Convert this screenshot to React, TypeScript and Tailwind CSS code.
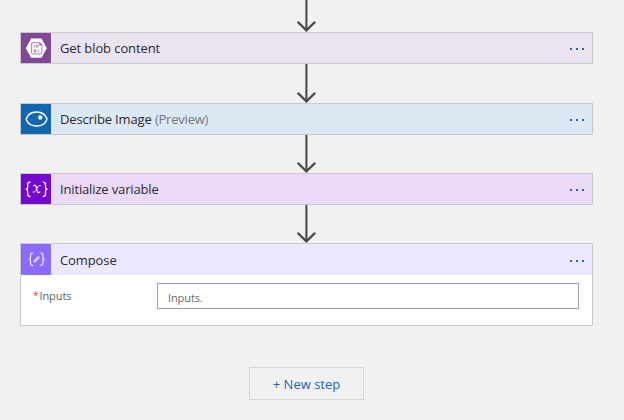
import type { ReactNode } from "react";

function Arrow({ className, length }: { className: string; length: number }) {
  return (
    <svg className={`block shrink-0 ${className}`} viewBox={`0 0 20 ${length}`} fill="none" stroke="#4b4b4b">
      <path d={`M9.4 0V${length - 1.5}`} strokeWidth="2.1" />
      <path d={`M1.2 ${length - 9.6}L9.4 ${length - 1.6}L17.6 ${length - 9.6}`} strokeWidth="2.2" strokeLinecap="round" />
    </svg>
  );
}

function BlobIcon() {
  return (
    <svg className="size-[31px]" viewBox="0 0 31 31" fill="none">
      <path d="M10.1 5.6h10.4l5.3 9.6-5.3 9.5H10.1L4.8 15.2z" fill="#fff" />
      <path d="M11.6 9.7h7.3l2 2v8.2q0 1-1 1h-8.3q-1 0-1-1v-9.2q0-1 1-1z" stroke="#9a70af" strokeWidth=".9" />
      <path d="M18.4 9.5v2.8h2.8z" fill="#804998" />
      <path d="M13.3 11.6v2.8M15.3 12h1.8v2.1h-1.8zM13 16.7h1.8v2.3H13zM17.3 16.4v2.8" stroke="#9a70af" strokeWidth=".8" />
    </svg>
  );
}

function EyeIcon() {
  return (
    <svg className="size-[31px]" viewBox="0 0 31 31" fill="none">
      <path d="M5.1 15C6.6 10.8 10.5 8 15.6 8S24.6 10.8 26.1 15C24.6 19.2 20.7 22 15.6 22S6.6 19.2 5.1 15z" stroke="#fff" strokeWidth="1.4" strokeLinejoin="round" />
      <rect x="17.4" y="11.6" width="3.8" height="3.8" rx=".7" fill="#fff" />
    </svg>
  );
}

function VariableIcon() {
  return (
    <svg className="size-[31px]" viewBox="0 0 31 31" fill="none" stroke="#fff" strokeWidth="1.25" strokeLinecap="round" strokeLinejoin="round">
      <path d="M9 8c-1.9 0-2.3.7-2.3 2.2V13c0 1.4-.5 2-1.6 2.2 1.1.2 1.6.8 1.6 2.2v2.8c0 1.5.4 2.2 2.3 2.2" />
      <path d="M22.2 8c1.9 0 2.3.7 2.3 2.2V13c0 1.4.5 2 1.6 2.2-1.1.2-1.6.8-1.6 2.2v2.8c0 1.5-.4 2.2-2.3 2.2" />
      <path d="M12.8 11.5c1.2-.6 1.9-.2 2.3 1.2l1.2 4.7c.4 1.4 1.2 1.7 2.5.5" strokeWidth="1.25" />
      <path d="M19.4 11.6c-1.4-.6-2.3.6-3.5 2.7-1.2 2.1-2.2 4.5-3.9 3.8" strokeWidth=".95" />
    </svg>
  );
}

function ComposeIcon() {
  return (
    <svg className="size-[31px]" viewBox="0 0 31 31" fill="none" stroke="#eee9ff" strokeWidth="1.15" strokeLinecap="round" strokeLinejoin="round">
      <path d="M11.6 9c-1.5 0-2 .5-2 1.8v2.4c0 1.2-.4 1.8-1.4 2 1 .2 1.4.8 1.4 2v2.4c0 1.3.5 1.8 2 1.8" />
      <path d="M19.8 9c1.5 0 2 .5 2 1.8v2.4c0 1.2.4 1.8 1.4 2-1 .2-1.4.8-1.4 2v2.4c0 1.3-.5 1.8-2 1.8" />
      <path d="m13 17.9.5-1.8 3.7-3.7 1.3 1.3-3.7 3.7z" fill="#cdbfff" strokeWidth=".9" />
    </svg>
  );
}

interface StepProps {
  icon: ReactNode;
  iconClass: string;
  barClass: string;
  title: ReactNode;
  children?: ReactNode;
}

function Step({ icon, iconClass, barClass, title, children }: StepProps) {
  return (
    <section className="w-full shrink-0 border border-[#cbc9cc] bg-white">
      <header className={`flex items-center ${children ? "h-[31px]" : "h-[30px]"} ${barClass}`}>
        <div className={`flex w-[30px] shrink-0 justify-center self-stretch overflow-hidden ${iconClass}`}>
          <div className="-mx-px shrink-0">{icon}</div>
        </div>
        <h2 className="ml-[9px] flex-1 whitespace-nowrap text-[13px] leading-[30px] text-[#2b2b2f]">{title}</h2>
        <button aria-label="More options" className="mr-[8px] flex gap-[4px] pt-[2px]">
          <span className="size-[2px] bg-[#1f67bd]" />
          <span className="size-[2px] bg-[#1f67bd]" />
          <span className="size-[2px] bg-[#1f67bd]" />
        </button>
      </header>
      {children}
    </section>
  );
}

export default function App() {
  return (
    <main className="flex h-[420px] w-[624px] flex-col items-center overflow-hidden bg-[#f1f1f1] pr-[11px] font-['Open_Sans','Noto_Sans',sans-serif]">
      <div className="flex w-[573px] flex-col items-center">
        <Arrow className="h-[32px] w-[20px]" length={32} />
        <Step icon={<BlobIcon />} iconClass="bg-[#804998]" barClass="bg-[#ebe3f0]" title={<span className="tracking-[-0.1px]">Get blob content</span>} />
        <Arrow className="h-[39px] w-[20px]" length={39} />
        <Step
          icon={<EyeIcon />}
          iconClass="bg-[#1267b0]"
          barClass="bg-[#dce8f4]"
          title={<span className="tracking-[-0.14px]">Describe Image <span className="tracking-[-0.22px] text-[#77777b]">(Preview)</span></span>}
        />
        <Arrow className="h-[38px] w-[20px]" length={38} />
        <Step icon={<VariableIcon />} iconClass="bg-[#7309d1]" barClass="bg-[#eadaf8]" title={<span className="tracking-[-0.15px]">Initialize variable</span>} />
        <Arrow className="h-[38px] w-[20px]" length={38} />
        <Step icon={<ComposeIcon />} iconClass="bg-[#8b6cff]" barClass="bg-[#ede8ff]" title={<span className="tracking-[-0.1px]">Compose</span>}>
          <div className="flex h-[50px] items-start pl-[12px] pr-[13px] pt-[8px]">
            <label className="flex w-[124px] text-[11px] leading-[25px] text-[#606060]">
              <span className="w-[6.5px] text-[10px] text-[#e83c45]">*</span>
              <span className="tracking-[-0.1px]">Inputs</span>
            </label>
            <div className="h-[26px] flex-1 border border-[#a3a3a3] bg-white pl-[10px] text-[11px] leading-[27px] tracking-[-0.1px] text-[#686868]">Inputs.</div>
          </div>
        </Step>
        <button className="mt-[41px] h-[33px] w-[115px] border border-[#d5d5d5] text-[13px] leading-[32px] text-[#1b66b3]">+ New step</button>
      </div>
    </main>
  );
}
